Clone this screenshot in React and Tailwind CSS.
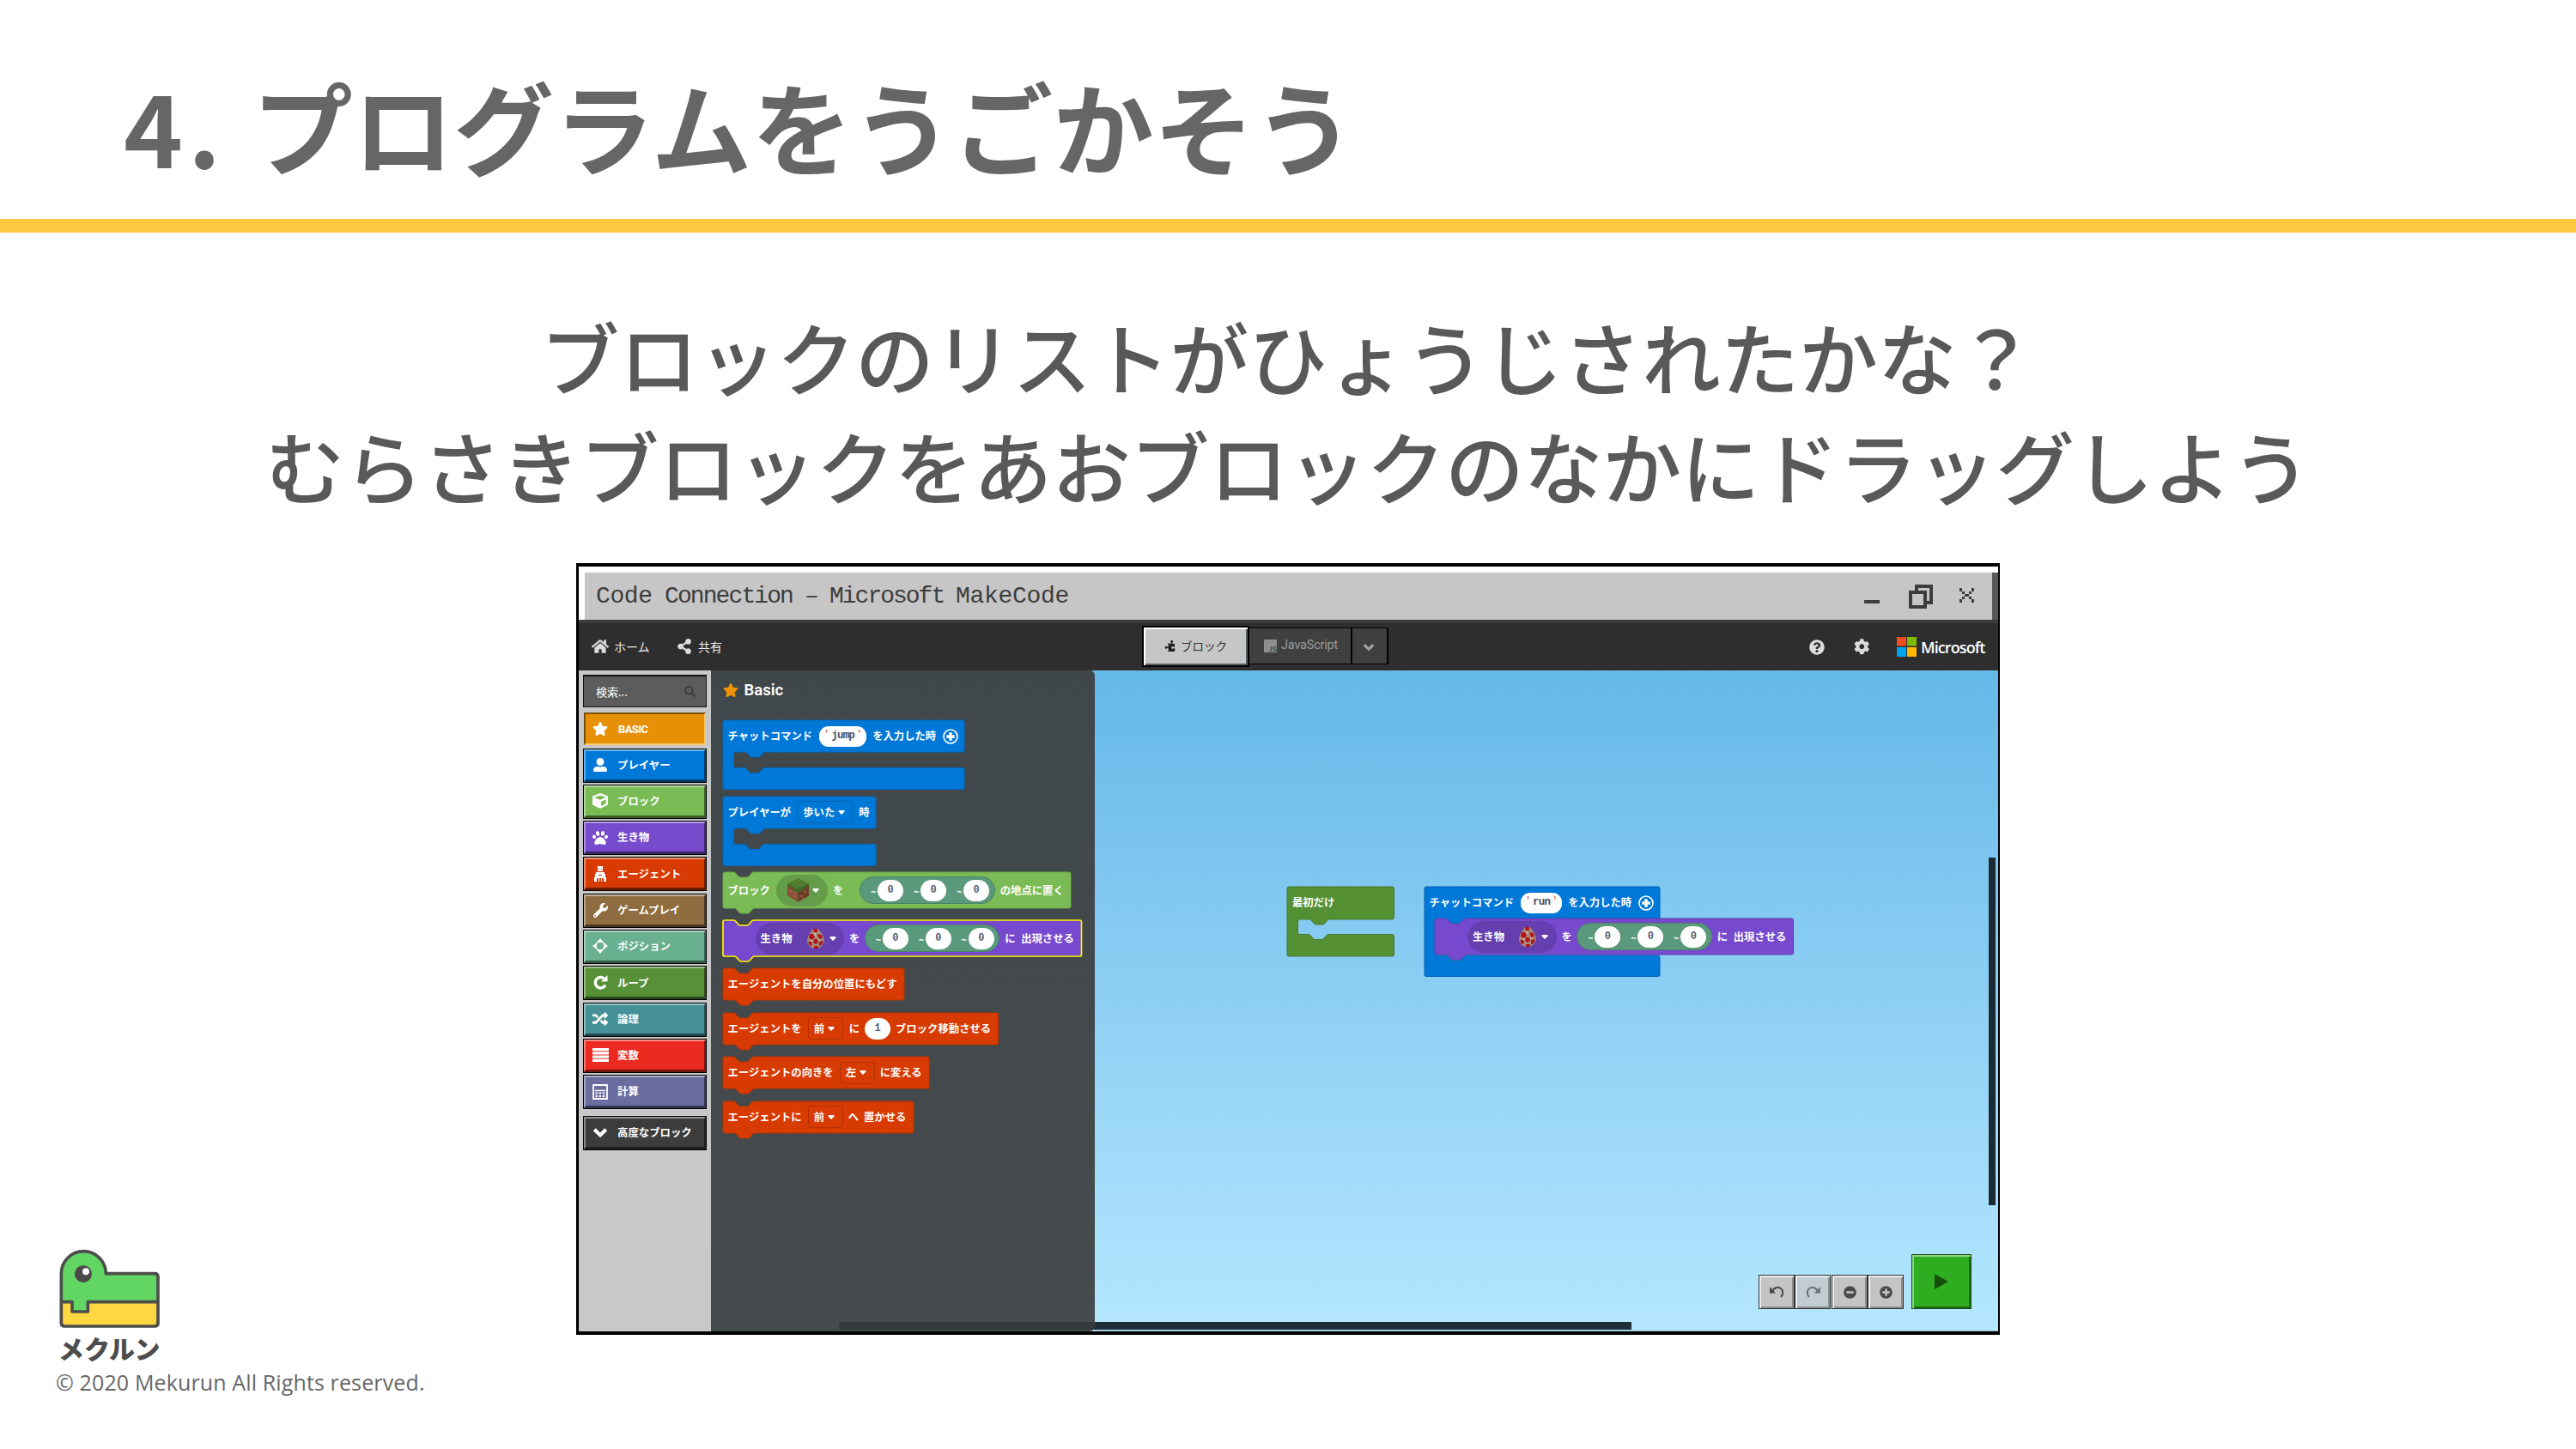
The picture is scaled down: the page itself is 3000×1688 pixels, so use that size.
import React from "react";
import {
  FaStar, FaUserAlt, FaCube, FaPaw, FaWrench, FaRandom, FaHome, FaShareAlt,
  FaSearch, FaPuzzlePiece, FaQuestionCircle, FaCog, FaMinusCircle, FaPlusCircle,
} from "react-icons/fa";

/* ---------- block shapes ---------- */

const notch = (x) =>
  `H${x} q1.5 0 2.5 1 l3.5 4 q1 1 2.5 1 h7 q1.5 0 2.5 -1 l3.5 -4 q1 -1 2.5 -1`;
const notchBack = (x) =>
  `H${x + 25} q-1.5 0 -2.5 1 l-3.5 4 q-1 1 -2.5 1 h-7 q-1.5 0 -2.5 -1 l-3.5 -4 q-1 -1 -2.5 -1`;

const stackPath = (w, h) =>
  `M0 2 Q0 0 2 0 ${notch(12)} H${w - 2} q2 0 2 2 V${h - 2} q0 2 -2 2 ${notchBack(12)} H2 q-2 0 -2 -2 Z`;

const mouthPath = (w, h, head, gap) =>
  `M0 2 Q0 0 2 0 H${w - 2} q2 0 2 2 V${head - 2} q0 2 -2 2 ${notchBack(24.5)} H14.5 q-2 0 -2 2 V${head + gap - 2} q0 2 2 2 ${notch(24.5)} H${w - 2} q2 0 2 2 V${h - 2} q0 2 -2 2 H2 q-2 0 -2 -2 Z`;

function Shape({ w, h, d, fill, stroke, sw }) {
  return (
    <svg className="absolute left-0 top-0 overflow-visible" width={w} height={h} viewBox={`0 0 ${w} ${h}`}>
      <path d={d} fill={fill} stroke={stroke} strokeWidth={sw} />
    </svg>
  );
}

function Stack({ w, h, fill, stroke, sw = 1, className = "", children }) {
  return (
    <div className={"relative shrink-0 " + className} style={{ width: w, height: h }}>
      <Shape w={w} h={h} d={stackPath(w, h)} fill={fill} stroke={stroke} sw={sw} />
      <div className="relative flex h-full items-center whitespace-nowrap pl-[6px]">{children}</div>
    </div>
  );
}

function Mouth({ w, h, head, gap, fill, stroke, className = "", children }) {
  return (
    <div className={"relative shrink-0 " + className} style={{ width: w, height: h }}>
      <Shape w={w} h={h} d={mouthPath(w, h, head, gap)} fill={fill} stroke={stroke} sw={1} />
      <div className="relative flex items-center whitespace-nowrap pl-[6px]" style={{ height: head }}>{children}</div>
    </div>
  );
}

const Caret = ({ className = "" }) => (
  <svg className={"shrink-0 " + className} width="8" height="5" viewBox="0 0 8 5">
    <path d="M1 0h6q1 .6 .4 1.4L4.6 4.6q-.6 .5-1.2 0L.6 1.4Q0 .6 1 0z" fill="#fff" />
  </svg>
);

const Field = ({ children, w, stroke }) => (
  <div className="ml-[7px] flex h-[26px] shrink-0 items-center rounded-[3px] border pl-[6px]" style={{ width: w, borderColor: stroke }}>
    <span>{children}</span>
    <Caret className="ml-[4px]" />
  </div>
);

const Str = ({ children, w }) => (
  <div className="ml-[8px] flex h-[24px] shrink-0 items-center justify-between rounded-[11px] bg-white px-[5px] font-['Liberation_Mono',monospace] font-normal text-[#4a5064]" style={{ width: w }}>
    <span className="-mt-[4px] text-[11px] font-bold leading-none text-[#c8605a]">'</span>
    <span className="-mx-[2px] text-[12.500px] font-bold tracking-[-0.8px]">{children}</span>
    <span className="-mt-[4px] text-[11px] font-bold leading-none text-[#c8605a]">'</span>
  </div>
);

const PlusRing = () => (
  <svg className="ml-[8px] shrink-0" width="18" height="18" viewBox="0 0 18 18">
    <circle cx="9" cy="9" r="8" fill="none" stroke="#fff" strokeWidth="1.6" />
    <path d="M9 4.3v9.4M4.3 9h9.4" stroke="#fff" strokeWidth="3.4" />
  </svg>
);

const Num = ({ children }) => (
  <div className="flex h-[25px] w-[30px] shrink-0 items-center justify-center rounded-[13px] bg-white font-['Liberation_Mono',monospace] text-[12px] font-bold text-[#575e75]">
    {children}
  </div>
);

const Position = ({ className = "" }) => (
  <div className={"flex h-[32px] w-[157.5px] shrink-0 items-center rounded-full border border-[#4a8268] bg-[#5b997c] " + className}>
    {[0, 1, 2].map((i) => (
      <div key={i} className="flex items-center">
        <span className="ml-[11.800px] w-[8.2px] pt-[3px] text-[11px] leading-none">~</span>
        <Num>0</Num>
      </div>
    ))}
  </div>
);

const GrassCube = () => (
  <svg className="ml-[13px] shrink-0" width="25" height="28" viewBox="0 0 25 28">
    <path d="M12.5 0L25 6.5 12.5 13.5 0 6.5z" fill="#4f7a2e" />
    <path d="M0 6.5l12.5 7V28L0 20.5z" fill="#8a4f38" />
    <path d="M25 6.5l-12.5 7V28L25 20.5z" fill="#6d3b29" />
    <path d="M0 6.5l12.5 7v3L10 16v-1.5l-3 1V12l-3 .5V10L0 9.500z M25 6.500l-12.500 7v3l3-.5v-2l3 1v-3l3 0v-2l3.500-1z" fill="#41682a" />
    <path d="M3 15h3M7 21h3M8 17h2M15 21h3M19 16h3M17 24h2" stroke="#b06a4c" strokeWidth="1.400" />
    <path d="M7 5h4M13 8h4M12 3h3" stroke="#5d8638" strokeWidth="1.400" />
  </svg>
);

const SpawnEgg = () => (
  <svg className="ml-[17px] shrink-0" width="20" height="23" viewBox="0 0 20 23">
    <path d="M7 0h6l3 4 3 5 1 6-3 5-4 3H7l-5-3-2-5 1-6 3-5z" fill="#a58c78" />
    <path d="M7 0h5v4H8zM3 6h4l2 4-3 3-4-2zM12 6l5 1 1 4-4 1zM8 12h4l1 4-3 2-3-2zM1 15l4 0 1 4-3 1zM14 15l5-1-2 5-3 1zM8 20h5v3H8z" fill="#b3131b" />
    <path d="M8 5h2v3H8zM13 12h2v2h-2zM5 13h2v2H5z" fill="#c9b79c" />
  </svg>
);

const SpawnBlock = ({ className, stroke, sw }) => (
  <Stack w={417.5} h={42} fill="#7749ce" stroke={stroke} sw={sw} className={className}>
    <div className="ml-[32px] flex h-[37px] w-[103.500px] shrink-0 items-center rounded-full bg-[#653eaf] pl-[6px]">
      <span>生き物</span>
      <SpawnEgg />
      <Caret className="ml-[6px]" />
    </div>
    <span className="ml-[6px]">を</span>
    <Position className="ml-[5.500px]" />
    <span className="ml-[6px]">に</span>
    <span className="ml-[6.500px]">出現させる</span>
  </Stack>
);

/* ---------- toolbox ---------- */

const Chevron = ({ width, color }) => (
  <svg width={width} height={width * 0.7} viewBox="0 0 20 14">
    <path d="M2.500 3L10 10.500 17.500 3" fill="none" stroke={color} strokeWidth="4.600" />
  </svg>
);
const AgentIcon = () => (
  <svg width="14" height="18" viewBox="0 0 14 18" fill="#fff">
    <path d="M4 0h6v6H4zM2 7h10v2h1v4h1v5h-3v-4H9v4H8v-4H6v4H5v-4H3v4H0v-5h1V9h1z" />
    <path d="M5 3h1v1H5zM8 3h1v1H8zM5 10h4v1H5z" fill="#d83b01" />
  </svg>
);
const PositionIcon = () => (
  <svg width="18" height="18" viewBox="0 0 18 18">
    <circle cx="9" cy="9" r="5.200" fill="none" stroke="#fff" strokeWidth="1.500" />
    <path d="M9 0l3.600 4.500H5.400zM9 18l3.600-4.500H5.400zM0 9l4.500-3.600v7.200zM18 9l-4.500-3.600v7.200z" fill="#fff" />
  </svg>
);
const LoopIcon = () => (
  <svg width="17" height="17" viewBox="0 0 17 17">
    <path d="M14 11.500A6.200 6.200 0 1 1 12.500 4" fill="none" stroke="#fff" strokeWidth="3.400" />
    <path d="M16.500 0v7.500H9z" fill="#fff" />
  </svg>
);
const ListIcon = () => (
  <svg width="19" height="16" viewBox="0 0 19 16" fill="#fff">
    <path d="M0 0h19v3.200H0zM0 4.300h19v3.200H0zM0 8.600h19v3.200H0zM0 12.800h19v3.200H0z" />
  </svg>
);
const CalcIcon = () => (
  <svg width="18" height="18" viewBox="0 0 18 18">
    <path d="M1 1h16v16H1z" fill="none" stroke="#fff" strokeWidth="1.800" />
    <path d="M3 7.500h12" stroke="#fff" strokeWidth="1.400" />
    <path d="M3.500 10.500h11M3.500 14h11" stroke="#fff" strokeWidth="2.200" strokeDasharray="2.600 1.500" />
  </svg>
);

const categories = [
  ["プレイヤー", <FaUserAlt size={16} />, "bg-[#0078d7]"],
  ["ブロック", <FaCube size={18} />, "bg-[#7abb55]"],
  ["生き物", <FaPaw size={18} />, "bg-[#764bcc]"],
  ["エージェント", <AgentIcon />, "bg-[#d83b01]"],
  ["ゲームプレイ", <FaWrench size={17} />, "bg-[#8f6d40]"],
  ["ポジション", <PositionIcon />, "bg-[#69b090]"],
  ["ループ", <LoopIcon />, "bg-[#569138]"],
  ["論理", <FaRandom size={18} />, "bg-[#459197]"],
  ["変数", <ListIcon />, "bg-[#ec2b20]"],
  ["計算", <CalcIcon />, "bg-[#6b6da0]"],
];

const Category = ({ name, icon, bg }) => (
  <div className="h-[40px] w-[143.5px] shrink-0 border border-black">
    <div className={"flex h-full w-full items-center border-2 border-b-[3px] border-l-white/40 border-t-white/45 border-b-black/50 border-r-black/45 " + bg}>
      <span className="ml-[5px] flex w-[24px] justify-center">{icon}</span>
      <span className="ml-[8px] whitespace-nowrap">{name}</span>
    </div>
  </div>
);

function Toolbox() {
  return (
    <div className="flex w-[154px] shrink-0 flex-col bg-[#c8c8c8] pl-[5px] pt-[5px] text-[12.4px] font-bold leading-none text-white">
      <div className="flex h-[38px] w-[143.5px] shrink-0 items-center justify-between border border-t-2 border-[#111] bg-[#5c5c5c] pl-[14px] pr-[12px] font-normal">
        <span className="text-[13px]">検索...</span>
        <FaSearch size={13} color="#3c3c3c" />
      </div>
      <div className="ml-px mt-[6px] flex h-[38px] w-[142px] shrink-0 items-center border-2 border-b-[#ffc766] border-l-[#7a4e0c] border-r-[#ffc766] border-t-[#7a4e0c] bg-[#e79006]">
        <span className="ml-[5px] flex w-[24px] justify-center"><FaStar size={18} /></span>
        <span className="ml-[9px] font-['Roboto','Noto_Sans_CJK_JP',sans-serif] text-[13px] tracking-[-0.6px]">BASIC</span>
      </div>
      <div className="mt-[3.500px] flex flex-col gap-[2.300px]">
        {categories.map(([name, icon, bg]) => (
          <Category key={name} name={name} icon={icon} bg={bg} />
        ))}
      </div>
      <div className="mt-[8px]">
        <Category name="高度なブロック" icon={<Chevron width={18} color="#fff" />} bg="bg-[#3c3c3c]" />
      </div>
    </div>
  );
}

function Flyout() {
  const red = "#d83b01";
  const redStroke = "#b93200";
  return (
    <div className="flex w-[447px] shrink-0 flex-col rounded-r-[6px] bg-gradient-to-b from-[#40474a] to-[#464b4d] pl-[13.500px] text-[12.35px] font-bold leading-none text-white">
      <div className="mt-[12px] flex h-[22px] shrink-0 items-center">
        <FaStar size={18} color="#ec9406" />
        <span className="ml-[7px] pt-px font-['Roboto','Noto_Sans_CJK_JP',sans-serif] text-[18.500px] font-semibold">Basic</span>
      </div>
      <Mouth w={281} h={80.5} head={37} gap={18.5} fill="#0078d7" stroke="#0068bd" className="mt-[24px]">
        <span>チャットコマンド</span>
        <Str w={55}>jump</Str>
        <span className="ml-[7px]">を入力した時</span>
        <PlusRing />
      </Mouth>
      <Mouth w={178} h={80.5} head={37} gap={18.5} fill="#0078d7" stroke="#0068bd" className="mt-[8px]">
        <span>プレイヤーが</span>
        <Field w={65} stroke="#0063b1">歩いた</Field>
        <span className="ml-[7px]">時</span>
      </Mouth>
      <Stack w={405} h={42} fill="#7abb55" stroke="#6aa848" className="mt-[8px]">
        <span>ブロック</span>
        <div className="ml-[7px] flex h-[37px] w-[60px] shrink-0 items-center rounded-full bg-[#659c49]">
          <GrassCube />
          <Caret className="ml-[4px]" />
        </div>
        <span className="ml-[6px]">を</span>
        <Position className="ml-[19px]" />
        <span className="ml-[6px]">の地点に置く</span>
      </Stack>
      <SpawnBlock className="mt-[14px]" stroke="#fff200" sw={1.7} />
      <Stack w={211} h={37} fill={red} stroke={redStroke} className="mt-[14px]">
        <span>エージェントを自分の位置にもどす</span>
      </Stack>
      <Stack w={320.5} h={37} fill={red} stroke={redStroke} className="mt-[14.500px]">
        <span>エージェントを</span>
        <Field w={41} stroke="#b43100">前</Field>
        <span className="ml-[7px]">に</span>
        <div className="ml-[6px]"><Num>1</Num></div>
        <span className="ml-[6px]">ブロック移動させる</span>
      </Stack>
      <Stack w={240} h={37} fill={red} stroke={redStroke} className="mt-[14.500px]">
        <span>エージェントの向きを</span>
        <Field w={41} stroke="#b43100">左</Field>
        <span className="ml-[6px]">に変える</span>
      </Stack>
      <Stack w={222} h={37} fill={red} stroke={redStroke} className="mt-[14.500px]">
        <span>エージェントに</span>
        <Field w={41} stroke="#b43100">前</Field>
        <span className="ml-[6px]">へ</span>
        <span className="ml-[6px]">置かせる</span>
      </Stack>
    </div>
  );
}

/* ---------- workspace ---------- */

const toolButton =
  "flex h-[40px] w-[42px] items-center justify-center border border-[#333] shadow-[inset_2px_2px_0_#ececec,inset_-2px_-2px_0_#8d8d8d] text-[#4a4a4a]";

const UndoIcon = ({ className = "" }) => (
  <svg className={className} width="17" height="14" viewBox="0 0 17 14">
    <path d="M3 6.500C5 1.500 10 .5 13 3s3 7 0 10" fill="none" stroke="currentColor" strokeWidth="2" />
    <path d="M0 1v7.500h7z" fill="currentColor" />
  </svg>
);

function Workspace() {
  return (
    <div className="relative flex-1 self-stretch border-b border-[#93b3c4] text-[12.35px] font-bold leading-none text-white">
      <div className="absolute left-[224px] top-[251.500px]">
        <Mouth w={124.5} h={81} head={38} gap={17.5} fill="#559134" stroke="#47792c">
          <span>最初だけ</span>
        </Mouth>
      </div>
      <div className="absolute left-[383.500px] top-[251.500px]">
        <Mouth w={274} h={104.5} head={38} gap={42} fill="#0078d7" stroke="#0063b4">
          <span>チャットコマンド</span>
          <Str w={48}>run</Str>
          <span className="ml-[7px]">を入力した時</span>
          <PlusRing />
        </Mouth>
      </div>
      <div className="absolute left-[396px] top-[289px]">
        <SpawnBlock stroke="#5f3aa8" sw={1} />
      </div>
      <div className="absolute right-[3px] top-[218px] h-[405px] w-[8px] bg-[#1c2a33]" />
      <div className="absolute -left-[298px] bottom-[1px] h-[9px] w-[298px] bg-[#353a3b]" />
      <div className="absolute bottom-[1px] left-0 h-[9px] w-[625px] bg-[#1f2f38]" />
      <div className="absolute bottom-[25px] right-[31px] flex items-end">
        <div className={toolButton + " bg-[#c4c4c4]"}><UndoIcon /></div>
        <div className={toolButton + " bg-[#c2ccd3]"}><UndoIcon className="-scale-x-100 opacity-70" /></div>
        <div className={toolButton + " ml-[1px] bg-[#c4c4c4]"}><FaMinusCircle size={15} /></div>
        <div className={toolButton + " bg-[#c4c4c4]"}><FaPlusCircle size={15} /></div>
        <div className="ml-[9px] flex h-[64px] w-[70px] items-center justify-center border border-[#1c4d14] bg-[#2fad20] shadow-[inset_2px_2px_0_#8fd684,inset_-2px_-2px_0_#1d6a14]">
          <svg width="16" height="18" viewBox="0 0 16 18"><path d="M0 0l16 9L0 18z" fill="#14500c" /></svg>
        </div>
      </div>
    </div>
  );
}

/* ---------- application window ---------- */

function TitleBar() {
  return (
    <div className="flex h-[66px] shrink-0 border-b-4 border-[#3b3b3b]">
      <div className="flex flex-1 items-center border-l-[7px] border-t-[7px] border-white bg-[#c6c6c6] pl-[13px] text-[#3c3c3c]">
        <div className="flex font-['Liberation_Mono',monospace] text-[28px] leading-none">
          <span className="w-[80px] tracking-[-0.400px]">Code</span>
          <span className="w-[163px] tracking-[-1.900px]">Connection</span>
          <span className="w-[29px]">–</span>
          <span className="w-[147px] tracking-[-2px]">Microsoft</span>
          <span className="w-[140px] tracking-[-0.300px]">MakeCode</span>
        </div>
        <div className="ml-auto flex pr-[21px]">
          <svg width="128" height="28" viewBox="0 0 128 28" shapeRendering="crispEdges" fill="none" stroke="#3c3c3c">
            <path d="M0 19.500h18" strokeWidth="4" />
            <path d="M61 7V2h17v19h-6" strokeWidth="4" />
            <path d="M54 9h17v17H54z" strokeWidth="4" />
            <path
              d="M111 4h3v4h-3zM125 4h3v4h-3zM114 8h3v3h-3zM122 8h3v3h-3zM117 11h5v3h-5zM114 14h3v3h-3zM122 14h3v3h-3zM111 17h3v4h-3zM125 17h3v4h-3z"
              fill="#3c3c3c"
              stroke="none"
            />
          </svg>
        </div>
      </div>
      <div className="mt-[7px] w-[7px] bg-[#585858]" />
    </div>
  );
}

function NavBar() {
  return (
    <div className="flex h-[55px] shrink-0 items-center bg-[#2e2e2e] text-[14px] leading-none text-[#ececec]">
      <div className="flex w-[656px] items-center pb-[2px] pl-[15px]">
        <FaHome size={20} color="#dcdcdc" />
        <span className="ml-[6px] w-[73px]">ホーム</span>
        <FaShareAlt size={18} color="#dcdcdc" />
        <span className="ml-[7px]">共有</span>
      </div>
      <div className="flex items-center pb-[2px]">
        <div className="flex h-[48px] w-[125px] items-center justify-center border-2 border-black bg-[#c6c6c6] text-[13.500px] text-[#333] shadow-[inset_2px_2px_0_#fff,inset_-2px_-2px_0_#565b66]">
          <FaPuzzlePiece size={13} color="#222" className="-rotate-90" />
          <span className="ml-[6px]">ブロック</span>
        </div>
        <div className="flex h-[43px] w-[120px] items-center border-y border-r-2 border-black bg-[#404040] pl-[17px] text-[#9a9a9a]">
          <span className="flex h-[15px] w-[15px] items-end justify-end bg-[#8f8f8f] text-[8px] font-bold leading-none text-[#444]">JS</span>
          <span className="ml-[5px] font-['Roboto',sans-serif] text-[14.500px] tracking-[-0.2px]">JavaScript</span>
        </div>
        <div className="flex h-[43px] w-[42px] items-center justify-center border-y border-r-2 border-black bg-[#404040] pr-[3px] pt-[3px]">
          <Chevron width={14} color="#a0a0a0" />
        </div>
      </div>
      <div className="ml-auto flex items-center pr-[13px]">
        <FaQuestionCircle size={18} color="#dcdcdc" />
        <FaCog size={18.5} color="#dcdcdc" className="ml-[34px]" />
        <svg className="ml-[32px]" width="23" height="23" viewBox="0 0 23 23">
          <path fill="#f25022" d="M0 0h11v10.500H0z" /><path fill="#7fba00" d="M12 0h11v10.500H12z" />
          <path fill="#00a4ef" d="M0 12h11v11H0z" /><path fill="#ffb900" d="M12 12h11v11H12z" />
        </svg>
        <span className="ml-[5px] w-[77px] font-['Open_Sans',sans-serif] text-[18px] font-semibold tracking-[-0.9px] text-white">Microsoft</span>
      </div>
    </div>
  );
}

function AppWindow() {
  return (
    <div className="flex h-[899px] w-[1658px] shrink-0 flex-col border-b-4 border-l-[3px] border-r-2 border-t-4 border-black bg-white">
      <TitleBar />
      <NavBar />
      <div className="flex min-h-0 flex-1 bg-gradient-to-b from-[#64b8e8] to-[#b5e7ff]">
        <Toolbox />
        <Flyout />
        <Workspace />
      </div>
    </div>
  );
}

function Mascot() {
  return (
    <svg width="118" height="93" viewBox="87 74 354 279">
      <path d="M94 160A78 78 0 0 1 250 160H420q12 0 12 12V332q0 12-12 12H106q-12 0-12-12Z" fill="#61d663" />
      <path d="M94 259H132V293H187V259H432V332q0 12-12 12H106q-12 0-12-12Z" fill="#ffd740" />
      <path d="M94 160A78 78 0 0 1 250 160H420q12 0 12 12V332q0 12-12 12H106q-12 0-12-12ZM94 259H132V293H187V259H432" fill="none" stroke="#4d4d4d" strokeWidth="11" strokeLinejoin="round" />
      <circle cx="171" cy="161" r="30" fill="#4d4849" />
      <circle cx="180" cy="153" r="12" fill="#fff" />
    </svg>
  );
}

export default function App() {
  return (
    <div className="flex h-[1688px] w-[3000px] flex-col overflow-hidden bg-white font-['Noto_Sans_CJK_JP',sans-serif]">
      <header className="flex h-[271px] shrink-0 items-center border-b-[16px] border-[#fec740] pl-[144px]">
        <h1 className="flex whitespace-nowrap pt-[36px] text-[117px] font-bold leading-none text-[#666]">
          <span className="w-[150px] tracking-[6px]">4.</span>
          <span>プログラムをうごかそう</span>
        </h1>
      </header>
      <p className="h-[385px] shrink-0 pt-[80px] text-center text-[91.600px] font-medium leading-[127px] text-[#595959]">
        ブロックのリストがひょうじされたかな？
        <br />
        むらさきブロックをあおブロックのなかにドラッグしよう
      </p>
      <main className="flex flex-1">
        <div className="flex w-[671px] shrink-0 flex-col justify-end pb-[61px] pl-[65px]">
          <div className="pl-[4px]"><Mascot /></div>
          <div className="mt-[7px] pl-[3px] text-[30px] font-black leading-[30px] text-[#4d4d4d]">メクルン</div>
          <div className="mt-[8px] whitespace-nowrap font-['Open_Sans',sans-serif] text-[25px] leading-[34px] tracking-[0.130px] text-[#666]">© 2020 Mekurun All Rights reserved.</div>
        </div>
        <AppWindow />
      </main>
    </div>
  );
}
